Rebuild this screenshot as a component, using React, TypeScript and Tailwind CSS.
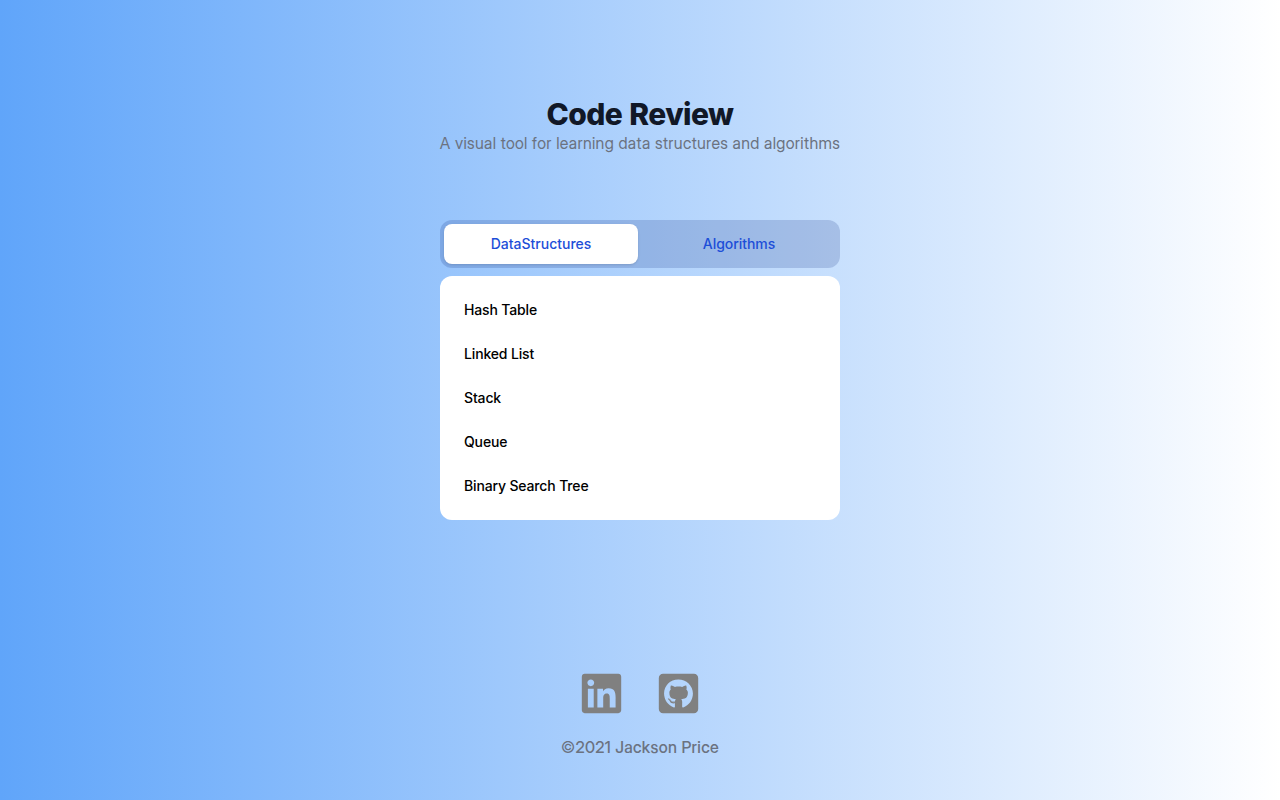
import React from "react";
import { FaLinkedin, FaGithubSquare } from "react-icons/fa";

const structures: string[] = ["Hash Table", "Linked List", "Stack", "Queue", "Binary Search Tree"];

export default function App() {
  return (
    <div className="flex h-screen flex-col items-center bg-[linear-gradient(to_right,#60a5fa,#ffffff)] font-['Inter',sans-serif]">
      <header className="mt-24 text-center">
        <h1 className="text-3xl font-extrabold tracking-[-0.57px] text-[#111827] [word-spacing:1px]">Code Review</h1>
        <p className="-mt-px mb-px font-['Inter_Display','Inter',sans-serif] leading-6 tracking-[0.34px] text-[#6b7280]">
          A visual tool for learning data structures and algorithms
        </p>
      </header>
      <main className="mt-16 w-[400px]">
        <div className="flex space-x-1 rounded-xl bg-[#1e3a8a]/20 p-1">
          <button className="w-full rounded-lg bg-white py-2.5 text-sm leading-5 font-medium text-[#1d4ed8] shadow">DataStructures</button>
          <button className="w-full rounded-lg py-2.5 text-sm leading-5 font-medium tracking-[-0.05px] text-[#1d4ed8]">Algorithms</button>
        </div>
        <div className="mt-2 rounded-xl bg-white p-3">
          <ul>
            {structures.map((name) => (
              <li key={name} className="p-3">
                <h3 className="text-sm leading-5 font-medium tracking-[-0.15px] text-black">{name}</h3>
              </li>
            ))}
          </ul>
        </div>
      </main>
      <footer className="mt-[151px] flex flex-col items-center">
        <div className="flex gap-8">
          <FaLinkedin size={45} color="gray" />
          <FaGithubSquare size={45} color="gray" />
        </div>
        <p className="mt-[19px] font-['Inter_Display','Inter',sans-serif] font-medium leading-6 tracking-[0.33px] text-[#6b7280]">
          <span className="font-normal">©</span>2021 Jackson Price
        </p>
      </footer>
    </div>
  );
}
